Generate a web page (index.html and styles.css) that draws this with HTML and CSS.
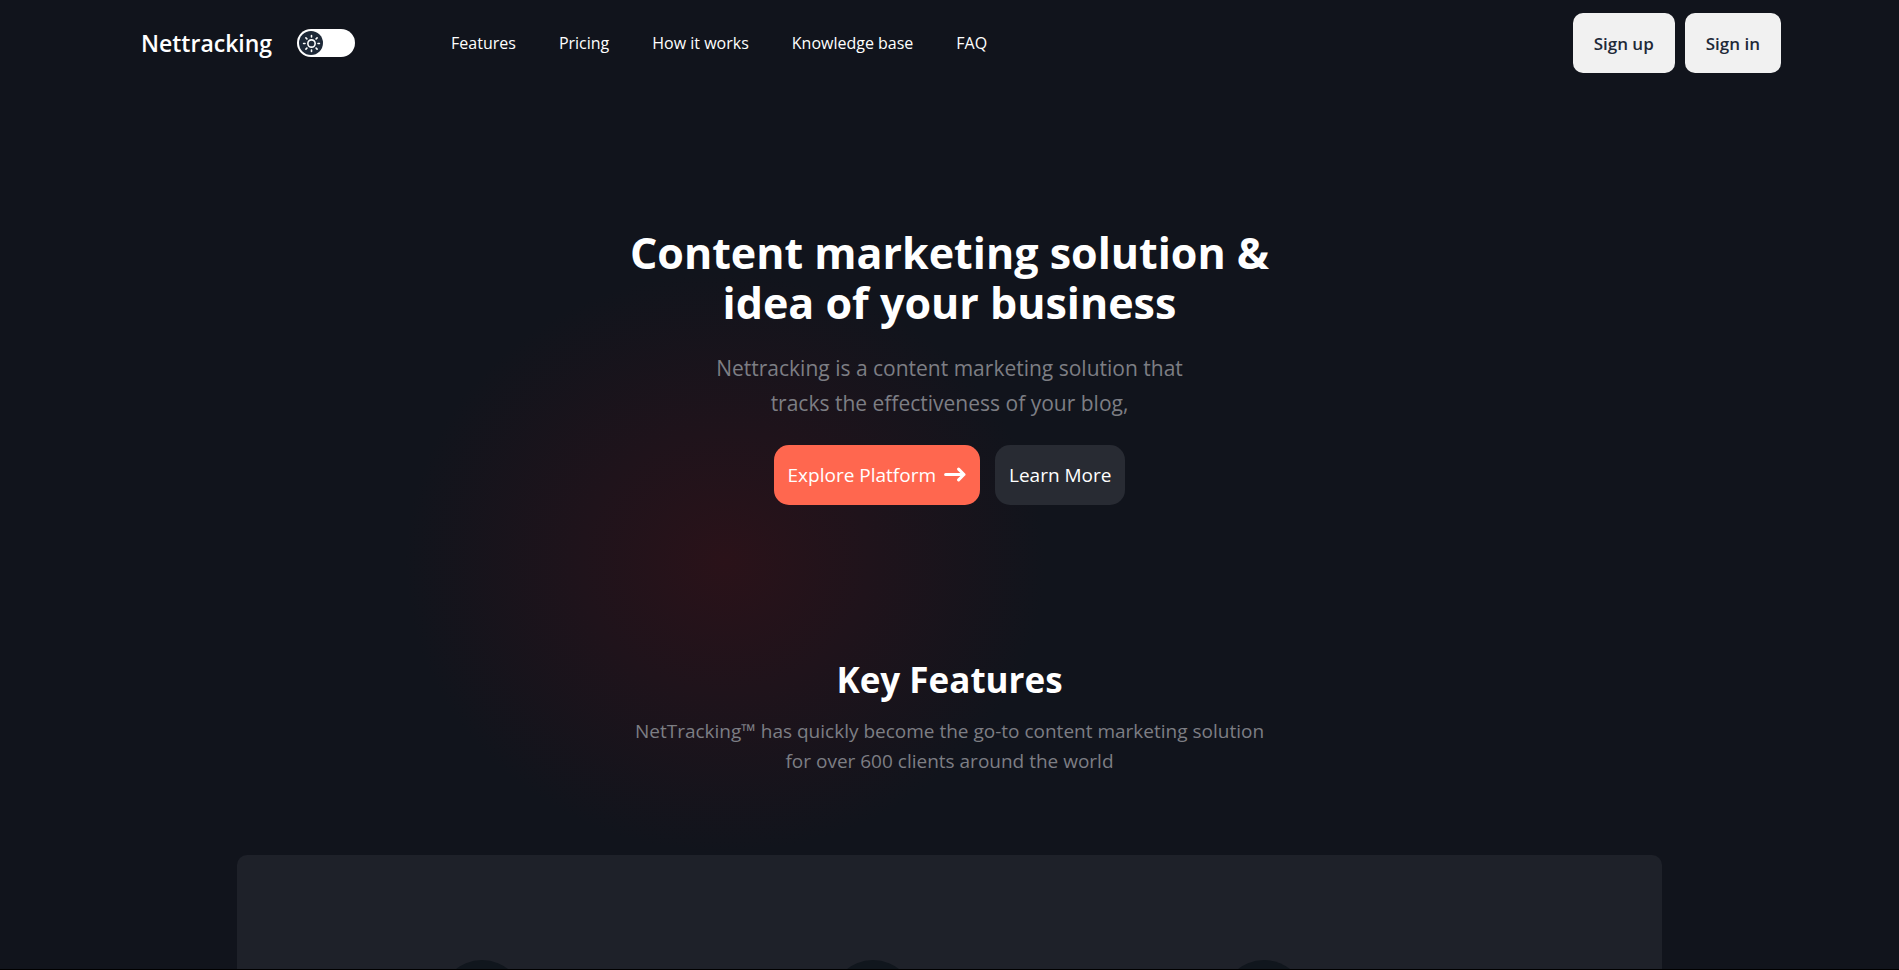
FILE: index.html
```html
<!DOCTYPE html>
<html lang="en">
<head>
<meta charset="utf-8">
<meta name="viewport" content="width=device-width, initial-scale=1">
<title>Nettracking</title>
<link rel="stylesheet" href="styles.css">
</head>
<body>
<div class="page">
  <header class="header">
    <a class="brand" href="#">Nettracking</a>
    <label class="toggle">
      <input class="toggle-input" type="checkbox" role="switch" aria-label="Dark mode">
      <span class="knob">
        <svg class="sun" viewBox="0 0 24 24" fill="none" stroke="currentColor" stroke-width="2" stroke-linecap="round" aria-hidden="true">
          <circle cx="12" cy="12" r="4.6"/>
          <path d="M12 2v1.8M12 20.2V22M2 12h1.8M20.2 12H22M4.9 4.9l1.3 1.3M17.8 17.8l1.3 1.3M4.9 19.1l1.3-1.3M17.8 6.2l1.3-1.3"/>
        </svg>
      </span>
    </label>
    <nav class="nav">
      <a href="#features">Features</a>
      <a href="#pricing">Pricing</a>
      <a href="#how">How it works</a>
      <a href="#knowledge">Knowledge base</a>
      <a href="#faq">FAQ</a>
    </nav>
    <div class="account">
      <button class="account-button" type="button">Sign up</button>
      <button class="account-button" type="button">Sign in</button>
    </div>
  </header>
  <main>
    <section class="hero">
      <div class="glow"></div>
      <h1 class="hero-title">Content marketing solution &amp;<br>idea of your business</h1>
      <p class="hero-text">Nettracking is a content marketing solution that<br>tracks the effectiveness of your blog,</p>
      <div class="actions">
        <button class="action primary" type="button">Explore Platform
          <svg class="arrow" viewBox="0 0 22 16" fill="none" stroke="currentColor" stroke-width="3" stroke-linecap="round" stroke-linejoin="round" aria-hidden="true"><path d="M1.6 7.5H20M14.6 2.1L20 7.5l-5.4 5.4"/></svg>
        </button>
        <button class="action secondary" type="button">Learn More</button>
      </div>
    </section>
    <section class="features" id="features">
      <h2 class="features-title">Key Features</h2>
      <p class="features-text">NetTracking™ has quickly become the go-to content marketing solution<br>for over 600 clients around the world</p>
      <div class="card">
        <span class="bubble"></span>
        <span class="bubble"></span>
        <span class="bubble"></span>
      </div>
    </section>
  </main>
</div>
</body>
</html>
```

FILE: styles.css
```css
* {
  box-sizing: border-box;
}

body {
  margin: 0;
  background: #11141c;
  color: #fff;
  font-family: "Open Sans", "Noto Sans", sans-serif;
}

.page {
  height: 100vh;
  overflow: hidden;
  border-bottom: 1px solid #000;
}

a {
  color: inherit;
  text-decoration: none;
}

button {
  border: 0;
  font-family: inherit;
  cursor: pointer;
}

h1,
h2,
p {
  margin: 0;
}

.header {
  display: flex;
  align-items: center;
  height: 86px;
  padding: 0 118px 0 141px;
}

.brand {
  font-size: 23px;
  font-weight: 600;
}

.toggle {
  display: flex;
  align-items: center;
  width: 58px;
  height: 28px;
  margin-left: 25px;
  padding: 2px;
  border-radius: 14px;
  background: #fff;
  cursor: pointer;
}

.toggle-input {
  appearance: none;
  width: 0;
  height: 0;
  margin: 0;
}

.knob {
  display: grid;
  place-items: center;
  width: 24px;
  height: 24px;
  border-radius: 50%;
  background: #1e2938;
}

.sun {
  width: 19px;
  height: 19px;
}

.toggle-input:checked + .knob {
  margin-left: auto;
}

.nav {
  display: flex;
  gap: 43px;
  margin-left: 96px;
  font-size: 16px;
}

.account {
  display: flex;
  gap: 10px;
  margin-left: auto;
}

.account-button {
  height: 60px;
  padding: 0 21px;
  border-radius: 10px;
  background: #f1f1f1;
  color: #1e2938;
  font-size: 17px;
  font-weight: 600;
}

.hero {
  position: relative;
  display: flex;
  flex-direction: column;
  align-items: center;
  padding-top: 142px;
  text-align: center;
}

.glow {
  position: absolute;
  z-index: -1;
  top: 186px;
  left: 50%;
  width: 640px;
  height: 580px;
  margin-left: -545px;
  background: radial-gradient(closest-side, #2a1219, #1f131b 45%, #11141c);
}

.hero-title {
  font-size: 43px;
  line-height: 50px;
  font-weight: 700;
}

.hero-text {
  margin-top: 23px;
  color: #7d7e84;
  font-size: 21px;
  line-height: 35px;
}

.actions {
  display: flex;
  gap: 15px;
  margin-top: 24px;
}

.action {
  display: flex;
  align-items: center;
  gap: 8px;
  height: 60px;
  padding: 0 14px;
  border-radius: 15px;
  color: #fff;
  font-size: 19px;
}

.primary {
  background: #ff674f;
}

.secondary {
  background: #282b33;
}

.arrow {
  width: 22px;
  height: 16px;
}

.features {
  margin-top: 150px;
  text-align: center;
}

.features-title {
  font-size: 35px;
  line-height: 50px;
  font-weight: 700;
}

.features-text {
  margin-top: 11px;
  color: #7d7e84;
  font-size: 19px;
  line-height: 30px;
}

.card {
  display: flex;
  justify-content: center;
  gap: 307px;
  width: 75%;
  height: 400px;
  margin: 79px auto 0;
  padding: 105px 153px 0 0;
  border-radius: 10px;
  background: #1e2129;
}

.bubble {
  width: 84px;
  height: 84px;
  border-radius: 50%;
  background: #10161d;
}
```
